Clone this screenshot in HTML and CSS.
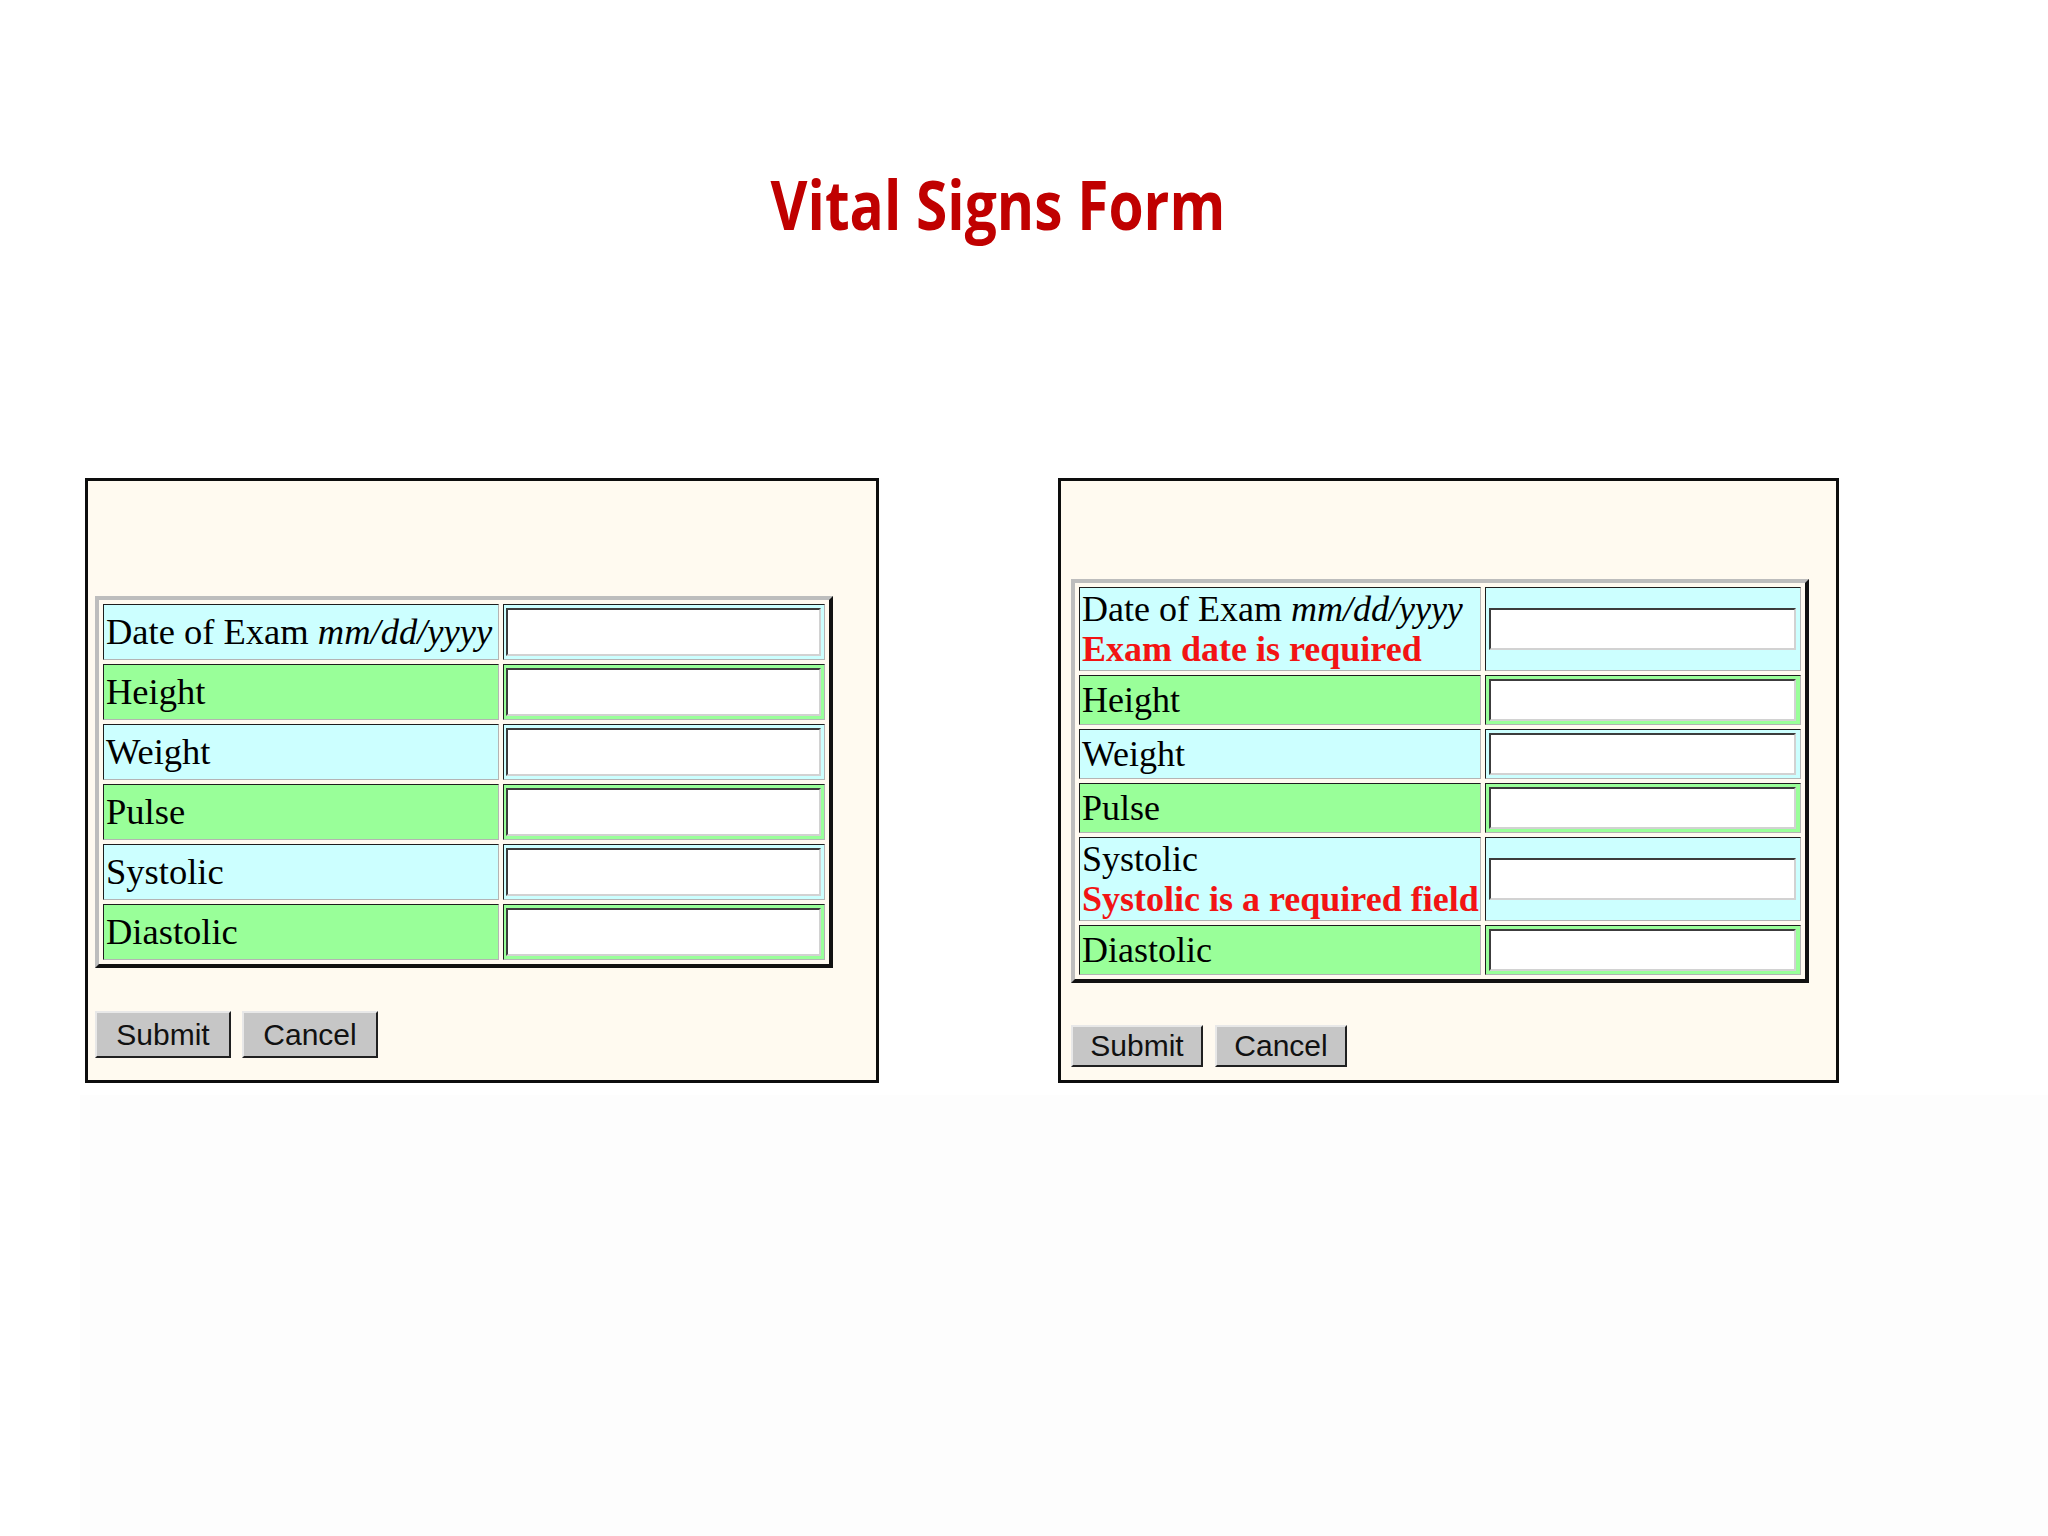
FILE: index.html
```html
<!DOCTYPE html>
<html lang="en">
<head>
<meta charset="utf-8">
<title>Vital Signs Form</title>
<link rel="stylesheet" href="styles.css">
</head>
<body>
<h1 class="title"><span class="title-text">Vital Signs Form</span></h1>
<div class="panels">
  <div class="panel panel-left">
    <table class="vs-table">
      <tr class="cyan"><td class="label">Date of Exam <i>mm/dd/yyyy</i></td><td class="field"><input class="box" type="text"></td></tr>
      <tr class="green"><td class="label">Height</td><td class="field"><input class="box" type="text"></td></tr>
      <tr class="cyan"><td class="label">Weight</td><td class="field"><input class="box" type="text"></td></tr>
      <tr class="green"><td class="label">Pulse</td><td class="field"><input class="box" type="text"></td></tr>
      <tr class="cyan"><td class="label">Systolic</td><td class="field"><input class="box" type="text"></td></tr>
      <tr class="green"><td class="label">Diastolic</td><td class="field"><input class="box" type="text"></td></tr>
    </table>
    <div class="buttons">
      <button class="btn" type="button">Submit</button>
      <button class="btn" type="button">Cancel</button>
    </div>
  </div>
  <div class="panel panel-right">
    <table class="vs-table">
      <tr class="cyan tall"><td class="label">Date of Exam <i>mm/dd/yyyy</i><br><b class="err">Exam date is required</b></td><td class="field"><input class="box" type="text"></td></tr>
      <tr class="green"><td class="label">Height</td><td class="field"><input class="box" type="text"></td></tr>
      <tr class="cyan"><td class="label">Weight</td><td class="field"><input class="box" type="text"></td></tr>
      <tr class="green"><td class="label">Pulse</td><td class="field"><input class="box" type="text"></td></tr>
      <tr class="cyan tall"><td class="label">Systolic<br><b class="err">Systolic is a required field</b></td><td class="field"><input class="box" type="text"></td></tr>
      <tr class="green"><td class="label">Diastolic</td><td class="field"><input class="box" type="text"></td></tr>
    </table>
    <div class="buttons">
      <button class="btn" type="button">Submit</button>
      <button class="btn" type="button">Cancel</button>
    </div>
  </div>
</div>
<div class="backdrop"></div>
</body>
</html>
```
FILE: styles.css
```css
html, body {
  margin: 0;
  padding: 0;
  background: #ffffff;
}
body {
  width: 2048px;
  height: 1536px;
  overflow: hidden;
}
.title {
  margin: 0;
  padding-top: 164px;
  width: 1996px;
  height: 80px;
  line-height: 80px;
  text-align: center;
  font-family: "Open Sans", "Noto Sans", sans-serif;
  font-weight: 700;
  font-size: 68px;
  color: #c00000;
}
.title-text {
  display: inline-block;
  transform: scaleX(0.836);
  transform-origin: center;
}
.panels {
  display: flex;
  align-items: flex-start;
  gap: 179px;
  padding-left: 85px;
  margin-top: 234px;
}
.panel {
  box-sizing: border-box;
  height: 605px;
  border: 3px solid #0d0d0d;
  background: #fffaf0;
}
.panel-left {
  width: 794px;
  padding: 115px 0 0 7px;
}
.panel-right {
  width: 781px;
  padding: 98px 0 0 10px;
}
.vs-table {
  box-sizing: border-box;
  width: 738px;
  table-layout: fixed;
  border-collapse: separate;
  border-spacing: 4px;
  border: 4px solid;
  border-color: #bdbdbd #111111 #111111 #bdbdbd;
  font-family: "Liberation Serif", "Times New Roman", serif;
  color: #000000;
}
.vs-table td {
  box-sizing: border-box;
  border: 1px solid;
  border-color: #1e1e1e #b4b4b4 #b4b4b4 #1e1e1e;
  vertical-align: middle;
  padding: 0 2px;
  white-space: nowrap;
  overflow: hidden;
}
.panel-left .vs-table td {
  height: 56px;
  font-size: 36.5px;
  line-height: 42px;
}
.panel-left .label { width: 396px; }
.panel-right .vs-table td {
  height: 50px;
  font-size: 36px;
  line-height: 40px;
}
.panel-right .label { width: 402px; }
.panel-right .tall td { height: 84px; }
.panel-right .field { padding: 0 3px; }
.cyan td { background: #ccffff; }
.green td { background: #99ff99; }
.err {
  color: #f21414;
  font-weight: 700;
  font-size: 36px;
}
.box {
  display: block;
  box-sizing: border-box;
  margin: 0;
  padding: 0;
  background: #ffffff;
  border: 2px solid;
  border-color: #3c3c3c #d2d2d2 #d2d2d2 #3c3c3c;
  outline: none;
}
.panel-left .box { width: 315px; height: 48px; }
.panel-right .box { width: 307px; height: 42px; }
.buttons {
  display: flex;
}
.panel-left .buttons { margin-top: 43px; gap: 11px; }
.panel-right .buttons { margin-top: 42px; gap: 12px; }
.btn {
  box-sizing: border-box;
  margin: 0;
  padding: 0;
  background: #c6c6c6;
  border: 2px solid;
  border-color: #e8e8e8 #202020 #202020 #e8e8e8;
  font-family: "Liberation Sans", Arial, sans-serif;
  font-size: 30px;
  color: #111111;
}
.panel-left .btn { width: 136px; height: 47px; }
.panel-right .btn { width: 132px; height: 42px; }
.backdrop {
  margin: 12px 0 0 80px;
  height: 460px;
  background: #fdfdfd;
}
```
